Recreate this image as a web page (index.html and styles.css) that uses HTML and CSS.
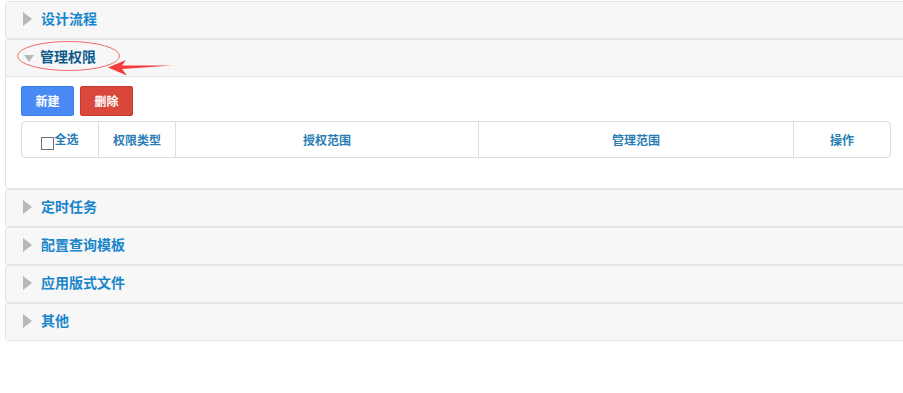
FILE: index.html
```html
<!DOCTYPE html>
<html>
    <head>
        <meta charset="UTF-8">
        <title>配置</title>
        <link rel="stylesheet" href="styles.css">
    </head>
    <body>
        <div class="accordion">
            <div class="panel">
                <div class="panel-heading"><span class="caret"></span>设计流程</div>
            </div>
            <div class="panel open">
                <div class="panel-heading"><span class="caret"></span>管理权限</div>
                <div class="panel-body">
                    <div class="toolbar">
                        <button class="btn btn-blue">新建</button>
                        <button class="btn btn-red">删除</button>
                    </div>
                    <table class="grid">
                        <tr>
                            <th class="col-check"><span class="check"></span>全选</th>
                            <th class="col-type">权限类型</th>
                            <th class="col-grant">授权范围</th>
                            <th class="col-manage">管理范围</th>
                            <th>操作</th>
                        </tr>
                    </table>
                </div>
            </div>
            <div class="panel">
                <div class="panel-heading"><span class="caret"></span>定时任务</div>
            </div>
            <div class="panel">
                <div class="panel-heading"><span class="caret"></span>配置查询模板</div>
            </div>
            <div class="panel">
                <div class="panel-heading"><span class="caret"></span>应用版式文件</div>
            </div>
            <div class="panel">
                <div class="panel-heading"><span class="caret"></span>其他</div>
            </div>
        </div>

        <svg class="mark" width="180" height="80" viewBox="0 0 180 80">
            <ellipse cx="68.5" cy="56" rx="51" ry="14.5" fill="none" stroke="#f06a6a" stroke-width="1"/>
            <polygon points="108,67.5 126,60 122,65.5 172,65.5 122,69 127,75.5" fill="#f33b3b"/>
        </svg>
    </body>
</html>
```

FILE: styles.css
```css
html, body {
    margin: 0;
    overflow: hidden;
    background: #fff;
}

body {
    font: 14px/1.5 "Noto Sans CJK SC", "Liberation Sans", sans-serif;
}

.accordion {
    width: 901px;
    padding: 1px 0 0 5px;
}

.panel {
    border: 1px solid #e3e3e3;
    border-radius: 3px;
    background: #fff;
}

.panel-heading {
    box-sizing: border-box;
    display: flex;
    align-items: center;
    height: 36px;
    padding: 0 0 3px 17px;
    background: #f7f7f7;
    color: #1886cc;
    font-weight: bold;
    font-size: 14px;
}

.caret {
    width: 0;
    height: 0;
    margin: 1px 9px 0 0;
    border-style: solid;
    border-width: 7px 0 7px 9px;
    border-color: transparent transparent transparent #b8b8b8;
}

.open .panel-heading {
    color: #0d5a8c;
}

.open .caret {
    margin: 3px 6px 0 1px;
    border-width: 7px 5.5px 0 5.5px;
    border-color: #b8b8b8 transparent transparent transparent;
}

.panel-body {
    border-top: 1px solid #e3e3e3;
    padding: 9px 15px 30px;
}

.toolbar {
    display: flex;
    gap: 6px;
    margin-bottom: 5px;
}

.btn {
    width: 53px;
    height: 30px;
    padding: 0 0 2px;
    border-radius: 2px;
    color: #fff;
    font: bold 12px "Noto Sans CJK SC", "Liberation Sans", sans-serif;
}

.btn-blue {
    background: #4a8af4;
    border: 1px solid #3d7ee8;
}

.btn-red {
    background: #d9483b;
    border: 1px solid #c63b30;
}

.grid {
    width: 870px;
    border-collapse: separate;
    border-spacing: 0;
    border: 1px solid #dedede;
    border-radius: 4px;
    table-layout: fixed;
}

.grid th {
    height: 35px;
    padding: 0;
    border-left: 1px solid #dedede;
    color: #2a7db4;
    font-size: 12px;
    font-weight: bold;
    text-align: center;
}

.grid th:first-child {
    border-left: none;
}

.col-check {
    width: 76px;
}

.col-type {
    width: 76px;
}

.col-grant {
    width: 302px;
}

.col-manage {
    width: 314px;
}

.check {
    display: inline-block;
    width: 11px;
    height: 11px;
    border: 1px solid #707070;
    background: #fff;
    vertical-align: -6px;
}

.mark {
    position: absolute;
    left: 0;
    top: 0;
    pointer-events: none;
}
```
